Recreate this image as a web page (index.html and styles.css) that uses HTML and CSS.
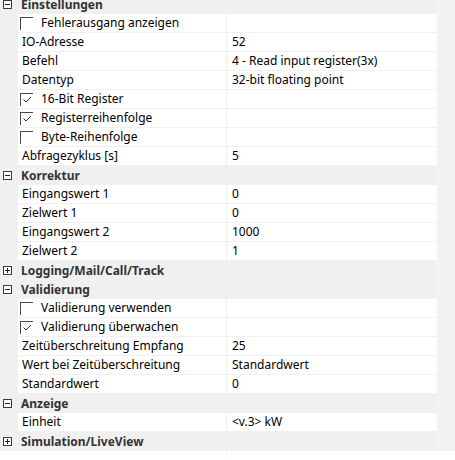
FILE: index.html
```html
<!DOCTYPE html>
<html>
<head>
<meta charset="utf-8">
<link rel="stylesheet" href="styles.css">
</head>
<body>
<div class="frame">
  <div class="grid">
    <div class="cat"><span class="tog minus"></span><span class="ctext">Einstellungen</span></div>
    <div class="row"><div class="gut"></div><div class="lab chk"><span class="box"></span>Fehlerausgang anzeigen</div><div class="val"></div></div>
    <div class="row"><div class="gut"></div><div class="lab">IO-Adresse</div><div class="val">52</div></div>
    <div class="row"><div class="gut"></div><div class="lab">Befehl</div><div class="val">4 - Read input register(3x)</div></div>
    <div class="row"><div class="gut"></div><div class="lab">Datentyp</div><div class="val">32-bit floating point</div></div>
    <div class="row"><div class="gut"></div><div class="lab chk"><span class="box"><svg class="tick" width="12" height="12" viewBox="0 0 12 12"><path d="M2.5 5.5 L5 8 L10 3" fill="none" stroke="#333" stroke-width="1"/></svg></span>16-Bit Register</div><div class="val"></div></div>
    <div class="row"><div class="gut"></div><div class="lab chk"><span class="box"><svg class="tick" width="12" height="12" viewBox="0 0 12 12"><path d="M2.5 5.5 L5 8 L10 3" fill="none" stroke="#333" stroke-width="1"/></svg></span>Registerreihenfolge</div><div class="val"></div></div>
    <div class="row"><div class="gut"></div><div class="lab chk"><span class="box"></span>Byte-Reihenfolge</div><div class="val"></div></div>
    <div class="row"><div class="gut"></div><div class="lab">Abfragezyklus [s]</div><div class="val">5</div></div>
    <div class="cat"><span class="tog minus"></span><span class="ctext">Korrektur</span></div>
    <div class="row"><div class="gut"></div><div class="lab">Eingangswert 1</div><div class="val">0</div></div>
    <div class="row"><div class="gut"></div><div class="lab">Zielwert 1</div><div class="val">0</div></div>
    <div class="row"><div class="gut"></div><div class="lab">Eingangswert 2</div><div class="val">1000</div></div>
    <div class="row"><div class="gut"></div><div class="lab">Zielwert 2</div><div class="val">1</div></div>
    <div class="cat"><span class="tog plus"></span><span class="ctext">Logging/Mail/Call/Track</span></div>
    <div class="cat"><span class="tog minus"></span><span class="ctext">Validierung</span></div>
    <div class="row"><div class="gut"></div><div class="lab chk"><span class="box"></span>Validierung verwenden</div><div class="val"></div></div>
    <div class="row"><div class="gut"></div><div class="lab chk"><span class="box"><svg class="tick" width="12" height="12" viewBox="0 0 12 12"><path d="M2.5 5.5 L5 8 L10 3" fill="none" stroke="#333" stroke-width="1"/></svg></span>Validierung überwachen</div><div class="val"></div></div>
    <div class="row"><div class="gut"></div><div class="lab">Zeitüberschreitung Empfang</div><div class="val">25</div></div>
    <div class="row"><div class="gut"></div><div class="lab">Wert bei Zeitüberschreitung</div><div class="val">Standardwert</div></div>
    <div class="row"><div class="gut"></div><div class="lab">Standardwert</div><div class="val">0</div></div>
    <div class="cat"><span class="tog minus"></span><span class="ctext">Anzeige</span></div>
    <div class="row"><div class="gut"></div><div class="lab">Einheit</div><div class="val">&lt;v.3&gt; kW</div></div>
    <div class="cat"><span class="tog plus"></span><span class="ctext">Simulation/LiveView</span></div>
  </div>
  <div class="side"></div>
</div>
<div class="stub"></div>
</body>
</html>
```
FILE: styles.css
```css
html, body {
  margin: 0;
  padding: 0;
  background: #ffffff;
  font-family: "Segoe UI", "Noto Sans", "Open Sans", sans-serif;
  font-size: 12px;
  color: #000;
  overflow: hidden;
}
.frame {
  display: flex;
  width: 455px;
  height: 451px;
  overflow: hidden;
}
.grid {
  width: 437px;
  margin-top: -5px;
  display: flex;
  flex-direction: column;
  background: #fff;
}
.side {
  flex: 1;
  background: #f2f2f2;
}
.row {
  display: flex;
  height: 18px;
  border-bottom: 1px solid #f0f0f0;
  line-height: 18px;
  white-space: nowrap;
}
.gut {
  width: 18px;
  flex: none;
  background: #f0f0f0;
}
.lab {
  width: 204px;
  flex: none;
  padding-left: 4px;
  border-right: 1px solid #f0f0f0;
  overflow: hidden;
}
.lab.chk {
  padding-left: 2px;
  width: 206px;
  display: flex;
  align-items: center;
}
.box {
  width: 12px;
  height: 12px;
  flex: none;
  border-left: 1px solid #4a4a4a;
  border-top: 1px solid #4a4a4a;
  margin-right: 8px;
  display: flex;
}
.tick {
  display: block;
}
.val {
  flex: 1;
  padding-left: 5px;
  overflow: hidden;
}
.cat {
  display: flex;
  align-items: center;
  height: 19px;
  background: #f0f0f0;
  line-height: 19px;
  white-space: nowrap;
}
.tog {
  width: 7px;
  height: 7px;
  flex: none;
  border: 1px solid #3c3c3c;
  margin-left: 3px;
  margin-right: 9px;
  position: relative;
  background: #fff;
}
.tog::before {
  content: "";
  position: absolute;
  left: 1px;
  top: 3px;
  width: 5px;
  height: 1px;
  background: #222;
}
.tog.plus::after {
  content: "";
  position: absolute;
  left: 3px;
  top: 1px;
  width: 1px;
  height: 5px;
  background: #222;
}
.ctext {
  font-weight: bold;
  color: #333;
}
.stub {
  margin-left: 226px;
  width: 1px;
  height: 6px;
  margin-top: 1px;
  background: #f0f0f0;
}
```
